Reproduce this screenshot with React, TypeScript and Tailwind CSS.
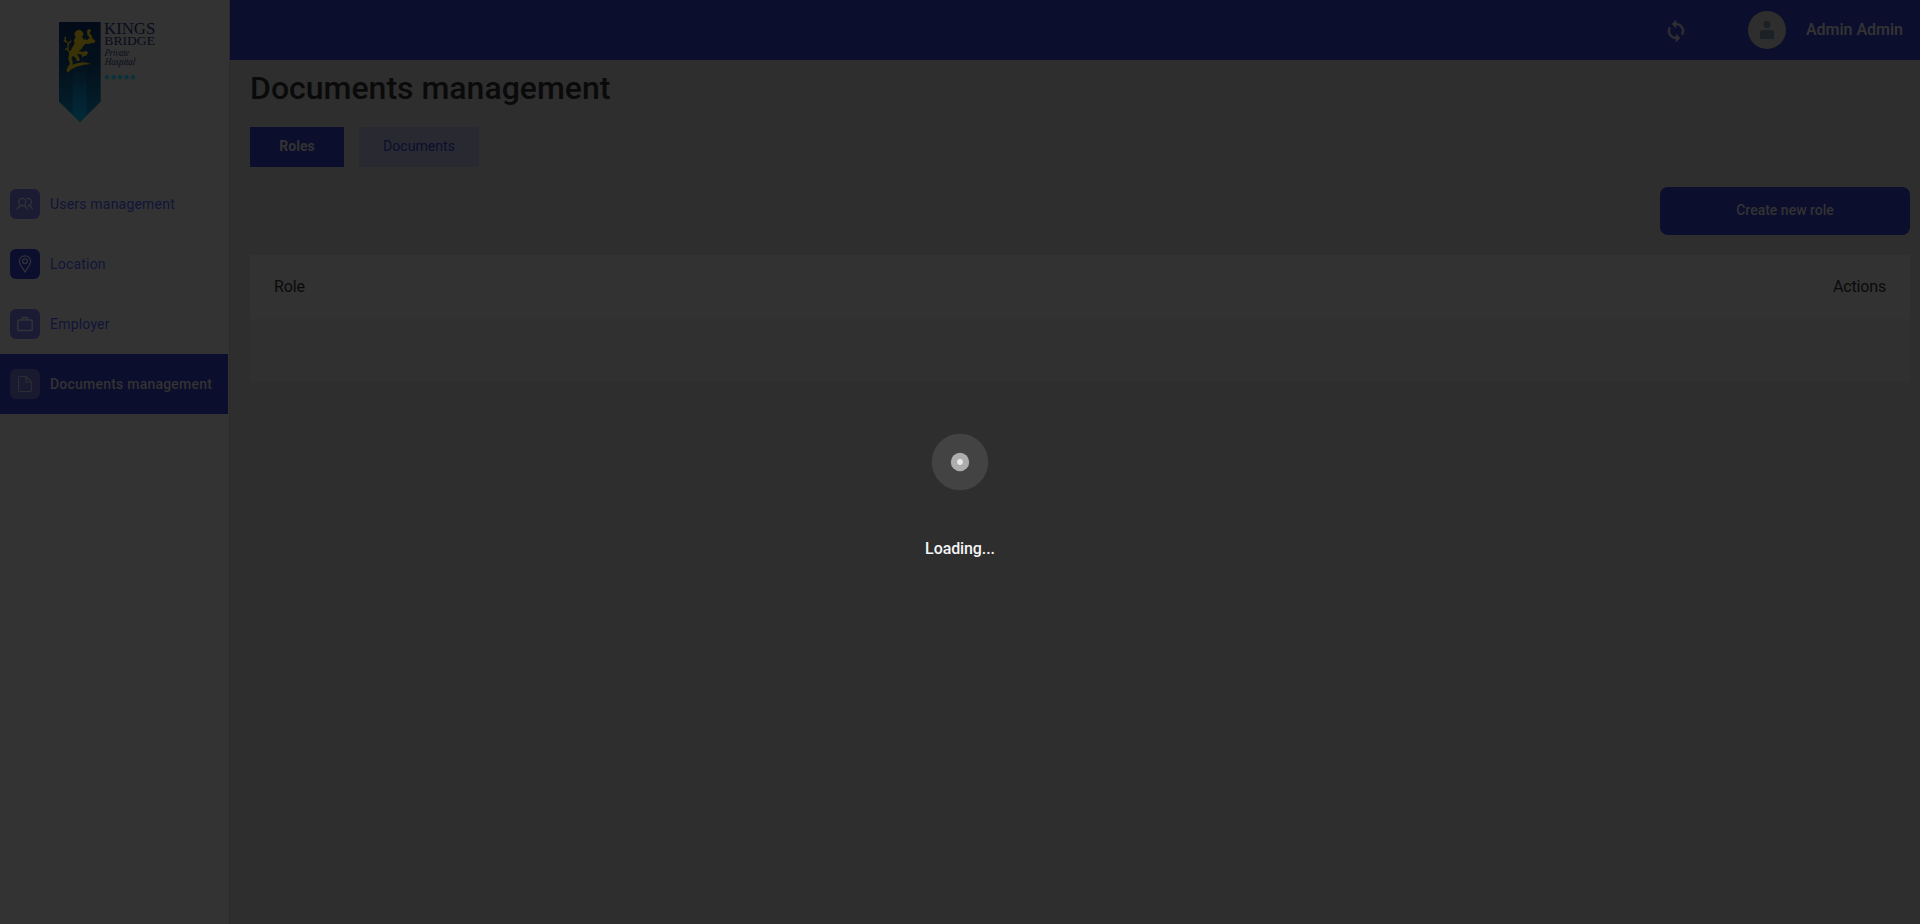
import type { ReactNode } from "react";

function Logo() {
  return (
    <svg width="130" height="120" viewBox="0 0 390 360" role="img" aria-label="Kingsbridge Private Hospital">
      <defs>
        <linearGradient id="shield" x1="0" y1="0" x2="0" y2="1">
          <stop offset="0" stopColor="#020b17" />
          <stop offset="0.45" stopColor="#03111c" />
          <stop offset="1" stopColor="#03222f" />
        </linearGradient>
        <linearGradient id="band" x1="0" y1="0" x2="0" y2="1">
          <stop offset="0" stopColor="#022532" stopOpacity="0" />
          <stop offset="1" stopColor="#032a38" />
        </linearGradient>
      </defs>
      <path d="M57 36H182V275L120 336L57 275Z" fill="url(#shield)" />
      <path d="M98 165H139V317L120 336L98 315Z" fill="url(#band)" />
      <g fill="#3b3206">
        <path d="M103 72L108 62L119 59L128 65L131 74L126 79L130 88L143 89L149 82L142 76L141 62L147 56L154 61L149 69L156 79L158 87L166 91L163 100L156 98L148 102L136 101L131 107L124 118L116 124L130 125L140 122L144 129L138 138L132 137L127 144L124 133L111 133L119 145L119 152L108 153L110 147L99 137L94 146L98 154L98 164L111 160L128 157L140 158L154 162L132 164L107 171L94 178L82 188L80 180L83 171L90 162L85 146L88 127L96 115L104 100L101 90L107 83Z" />
        <path d="M91 128C74 120 92 105 82 97C72 94 76 84 76 80M82 97L71 91M84 103L94 92M83 115L75 119" fill="none" stroke="#3b3206" strokeWidth="4" />
      </g>
      <g fill="#080c1b" fontFamily="'Liberation Serif', serif">
        <text x="192" y="71" fontSize="49" textLength="154" lengthAdjust="spacingAndGlyphs">KINGS</text>
        <text x="193" y="105" fontSize="38" textLength="152" lengthAdjust="spacingAndGlyphs">BRIDGE</text>
        <g transform="skewX(-6)">
          <text x="208" y="137" fontSize="31" fontStyle="italic" textLength="73" lengthAdjust="spacingAndGlyphs">Private</text>
          <text x="211" y="165" fontSize="31" fontStyle="italic" textLength="91" lengthAdjust="spacingAndGlyphs">Hospital</text>
        </g>
      </g>
      {[201, 221, 240, 260, 279].map((x) => (
        <path key={x} transform={`translate(${x} 201)`} d="M0-9L2.600-3L9-3L4 1.500L6 8L0 4.500L-6 8L-4 1.500L-9-3L-2.600-3Z" fill="#05323d" />
      ))}
    </svg>
  );
}

function SyncIcon() {
  return (
    <svg viewBox="0 0 24 24" className="mt-0.5 mr-[60px] size-6" fill="#2e2e33" stroke="#2e2e33" strokeWidth="0.500">
      <path d="M12 4V1L8 5l4 4V6c3.310 0 6 2.690 6 6 0 1.010-.250 1.970-.700 2.800l1.460 1.460A7.930 7.930 0 0 0 20 12c0-4.420-3.580-8-8-8zm0 14c-3.310 0-6-2.690-6-6 0-1.010.250-1.970.700-2.800L5.240 7.740A7.930 7.930 0 0 0 4 12c0 4.420 3.580 8 8 8v3l4-4-4-4v3z" />
    </svg>
  );
}

function UsersIcon() {
  return (
    <svg width="18" height="14" viewBox="0 0 18 14" fill="none" stroke="#333339" strokeWidth="1.2">
      <circle cx="6.3" cy="5" r="3.6" />
      <path d="M1 12.6C2 10 3.8 8.6 6.3 8.6S10.6 10 11.6 12.6M10.5 1.5C13 .8 15.4 2.5 15.4 5c0 2-1.8 3.6-3.7 3.6 2.5 0 4.2 1.5 5 4" />
    </svg>
  );
}

function PinIcon() {
  return (
    <svg width="14" height="18" viewBox="0 0 14 18" fill="none" stroke="#33333b" strokeWidth="1.2">
      <path d="M7 17C5 13 1.4 9.7 1.4 6.4a5.6 5.6 0 0 1 11.2 0C12.600 9.700 9 13 7 17Z" />
      <circle cx="7" cy="6.300" r="2.400" />
    </svg>
  );
}

function BriefcaseIcon() {
  return (
    <svg width="18" height="16" viewBox="0 0 18 16" fill="none" stroke="#333339" strokeWidth="1.400">
      <rect x="1.800" y="4" width="14.400" height="10.500" rx="1" />
      <path d="M6.500 4V1.500h5V4" />
    </svg>
  );
}

function FileIcon() {
  return (
    <svg width="16" height="18" viewBox="0 0 16 18" fill="none" stroke="#2c2c34" strokeWidth="1.200">
      <path d="M9 1.500H3A1.500 1.500 0 0 0 1.500 3v12A1.500 1.500 0 0 0 3 16.500h10A1.500 1.500 0 0 0 14.500 15V7L9 1.500V7h5.500" />
    </svg>
  );
}

type NavItemProps = { label: string; icon: ReactNode; tile: string; active?: boolean };

function NavItem({ label, icon, tile, active }: NavItemProps) {
  return (
    <a
      className={`flex h-[60px] w-[228px] items-center gap-2.5 pl-2.5 text-sm whitespace-nowrap ${
        active ? "bg-[#0c0e2d] font-medium tracking-[0.22px] text-[#333333]" : "tracking-[0.2px] text-[#12133a]"
      }`}
    >
      <span className={`flex size-[30px] shrink-0 items-center justify-center rounded-md ${tile}`}>{icon}</span>
      {label}
    </a>
  );
}

export default function App() {
  return (
    <div className="relative flex h-[924px] w-full overflow-hidden bg-[#2e2e2e] font-['Roboto',sans-serif]">
      <aside className="flex w-[229px] shrink-0 flex-col bg-[#333333]">
        <div className="h-[174px] pt-2.5 pl-10">
          <Logo />
        </div>
        <nav>
          <NavItem label="Users management" icon={<UsersIcon />} tile="bg-[#1b1c33]" />
          <NavItem label="Location" icon={<PinIcon />} tile="bg-[#0c0e2d]" />
          <NavItem label="Employer" icon={<BriefcaseIcon />} tile="bg-[#1b1c33]" />
          <NavItem label="Documents management" icon={<FileIcon />} tile="bg-[#191a30]" active />
        </nav>
      </aside>
      <div className="w-px shrink-0 bg-[#2b2b2b]" />
      <main className="flex grow flex-col">
        <header className="flex h-[60px] shrink-0 items-center justify-end bg-[#0c0e2d] pr-[17px]">
          <SyncIcon />
          <div className="mr-5 flex size-[38px] items-center justify-center rounded-full bg-[#2e2e2e]">
            <svg width="14" height="18" viewBox="0 0 14 18" fill="#1b2124">
              <circle cx="7" cy="3.600" r="3.500" />
              <path d="M0 18V12a3 3 0 0 1 3-3h8a3 3 0 0 1 3 3v6Z" />
            </svg>
          </div>
          <span className="text-base font-semibold tracking-[-0.02px] text-[#333333]">Admin Admin</span>
        </header>
        <section className="flex flex-col pr-2.5 pl-5">
          <h1 className="mt-2 text-[32px] leading-10 font-medium text-[#0a0a0a]">Documents management</h1>
          <div className="mt-[19px] flex gap-[15px] text-sm font-medium">
            <button className="h-10 w-[94px] bg-[#0c0e2d] pb-0.5 font-bold text-[#333333]">Roles</button>
            <button className="h-10 w-[120px] bg-[#292931] pb-0.5 font-normal tracking-[0.060px] text-[#0c0e2d]">
              Documents
            </button>
          </div>
          <button className="mt-5 h-12 w-[250px] self-end rounded-lg bg-[#0c0e2d] pb-0.5 text-sm font-medium text-[#333333]">
            Create new role
          </button>
          <div className="mt-5 flex flex-col text-base text-[#0a0a0a]">
            <div className="flex h-16 items-center justify-between bg-[#323232] px-6">
              <span className="tracking-[-0.1px]">Role</span>
              <span className="tracking-[-0.15px]">Actions</span>
            </div>
            <div className="h-[63px] bg-[#303030]" />
          </div>
        </section>
      </main>
      <div className="absolute inset-0 flex flex-col items-center pt-[434px]" role="status">
        <svg width="58" height="58" viewBox="0 0 58 58" className="-mt-px">
          <circle cx="29" cy="29" r="28.300" fill="#434343" />
          <circle cx="29" cy="29" r="9.200" fill="#adadad" />
          <circle cx="29" cy="29" r="2.900" fill="#e8e8e8" />
        </svg>
        <p className="mt-[46px] text-base font-medium tracking-[-0.1px] text-[#f5f5f5]">Loading...</p>
      </div>
    </div>
  );
}
